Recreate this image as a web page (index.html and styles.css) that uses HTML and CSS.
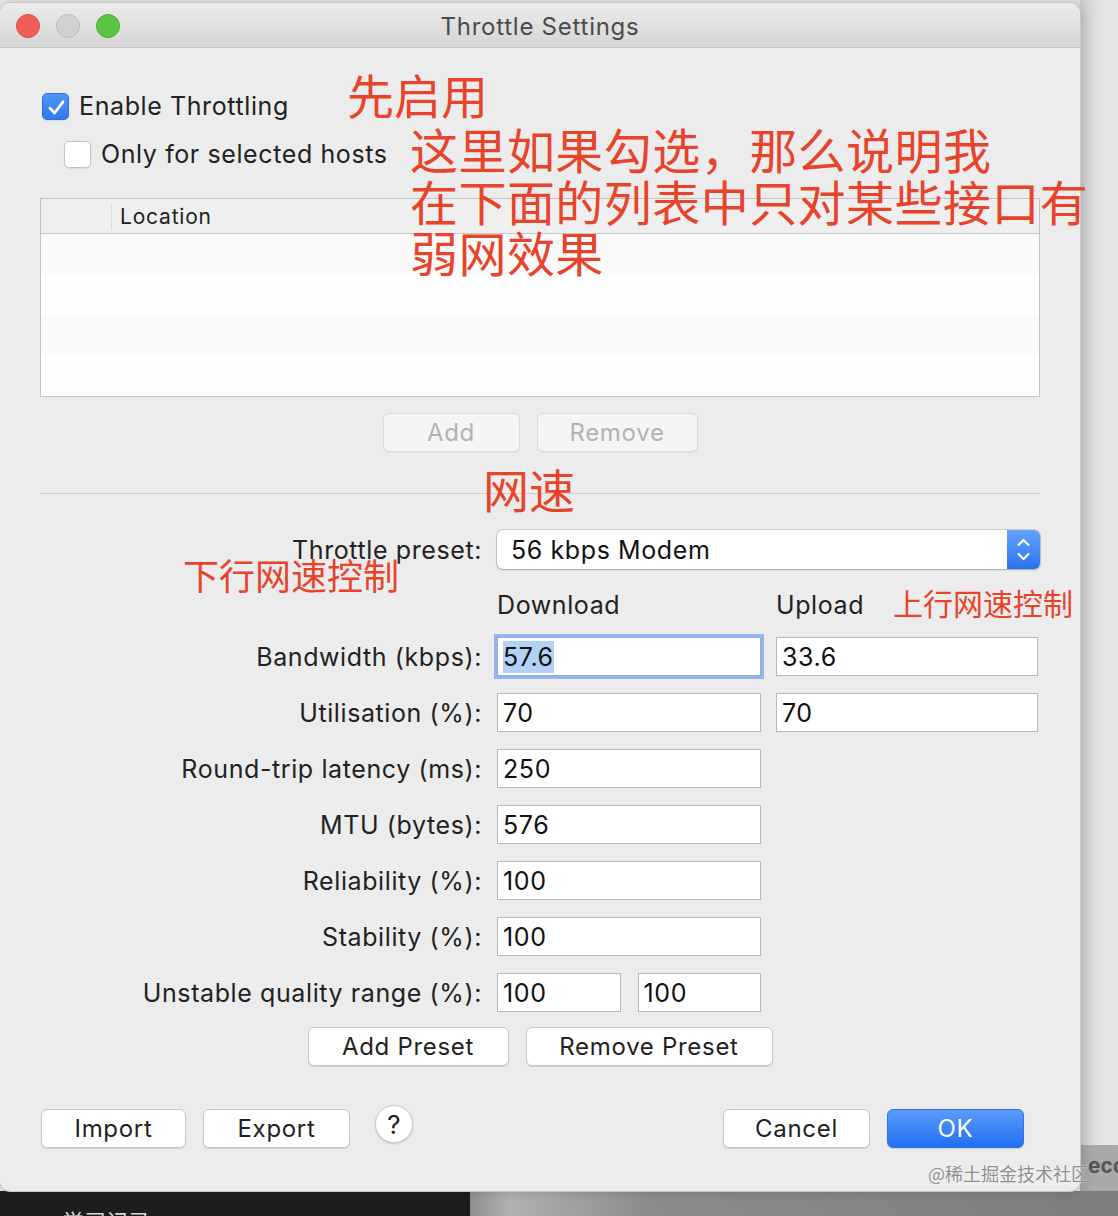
FILE: index.html
```html
<!DOCTYPE html>
<html lang="zh">
<head>
<meta charset="utf-8">
<title>Throttle Settings</title>
<link rel="stylesheet" href="styles.css">
</head>
<body>
<div class="screen">
  <div class="top">
    <div class="window">
      <div class="titlebar">
        <div class="lights">
          <span class="light red"></span>
          <span class="light grey"></span>
          <span class="light green"></span>
        </div>
        <div class="title">Throttle Settings</div>
        <div></div>
      </div>
      <div class="content">
        <div class="check-row row1">
          <span class="cb checked"><svg viewBox="0 0 27 27" width="27" height="27"><path d="M7 14.2 L11.6 19 L20 7.8" fill="none" stroke="#fff" stroke-width="2.8" stroke-linecap="round" stroke-linejoin="round"/></svg></span>
          <span>Enable Throttling</span>
        </div>
        <div class="check-row row2">
          <span class="cb"></span>
          <span>Only for selected hosts</span>
        </div>
        <div class="table">
          <div class="thead">
            <div class="th th-first"></div>
            <div class="th th-loc">Location</div>
          </div>
          <div class="tbody">
            <div class="tr"></div>
            <div class="tr"></div>
            <div class="tr"></div>
            <div class="tr"></div>
          </div>
        </div>
        <div class="btn-row btn-row-list">
          <button class="btn disabled w-add">Add</button>
          <button class="btn disabled w-remove">Remove</button>
        </div>
        <div class="sep"></div>
        <div class="form">
          <div class="frow frow-preset">
            <div class="lbl">Throttle preset:</div>
            <div class="select">
              <span class="select-text">56 kbps Modem</span>
              <span class="stepper"><svg viewBox="0 0 33 39" width="33" height="39"><path d="M11.5 15 L16.5 10 L21.5 15 M11.5 24 L16.5 29 L21.5 24" fill="none" stroke="#fff" stroke-width="2.2" stroke-linecap="round" stroke-linejoin="round"/></svg></span>
            </div>
          </div>
          <div class="frow frow-head">
            <div></div>
            <div class="colhead">Download</div>
            <div class="colhead">Upload</div>
          </div>
          <div class="frow">
            <div class="lbl">Bandwidth (kbps):</div>
            <div class="field focused"><span class="sel">57.6</span></div>
            <div class="field">33.6</div>
          </div>
          <div class="frow">
            <div class="lbl">Utilisation (%):</div>
            <div class="field">70</div>
            <div class="field">70</div>
          </div>
          <div class="frow">
            <div class="lbl">Round-trip latency (ms):</div>
            <div class="field">250</div>
            <div></div>
          </div>
          <div class="frow">
            <div class="lbl">MTU (bytes):</div>
            <div class="field">576</div>
            <div></div>
          </div>
          <div class="frow">
            <div class="lbl">Reliability (%):</div>
            <div class="field">100</div>
            <div></div>
          </div>
          <div class="frow">
            <div class="lbl">Stability (%):</div>
            <div class="field">100</div>
            <div></div>
          </div>
          <div class="frow">
            <div class="lbl">Unstable quality range (%):</div>
            <div class="pair">
              <div class="field">100</div>
              <div class="field">100</div>
            </div>
            <div></div>
          </div>
        </div>
        <div class="btn-row btn-row-preset">
          <button class="btn w-addp">Add Preset</button>
          <button class="btn w-remp">Remove Preset</button>
        </div>
        <div class="footer">
          <button class="btn w-import">Import</button>
          <button class="btn w-export">Export</button>
          <span class="help">?</span>
          <span class="spacer"></span>
          <button class="btn w-cancel">Cancel</button>
          <button class="btn primary w-ok">OK</button>
        </div>
      </div>
    </div>
    <div class="side">
      <div class="side-fill"></div>
      <div class="side-block">eco</div>
    </div>
  </div>
  <div class="bottom">
    <div class="dark"><span class="dark-text">学习记录</span></div>
    <div class="greyzone"></div>
  </div>

  <div class="note n1">先启用</div>
  <div class="note n2">这里如果勾选，那么说明我<br>在下面的列表中只对某些接口有<br>弱网效果</div>
  <div class="note n3">网速</div>
  <div class="note n4">下行网速控制</div>
  <div class="note n5">上行网速控制</div>
  <div class="watermark">@稀土掘金技术社区</div>
</div>
</body>
</html>
```

FILE: styles.css
```css
* { box-sizing: border-box; }
html, body { margin: 0; padding: 0; }
body {
  width: 1118px;
  height: 1216px;
  overflow: hidden;
  background: #e4e4e4;
  font-family: Inter, "Liberation Sans", "Helvetica Neue", Arial, sans-serif;
  color: #222;
  letter-spacing: 0.6px;
}
.screen {
  position: relative;
  width: 1118px;
  height: 1216px;
  display: flex;
  flex-direction: column;
}
.top {
  display: flex;
  height: 1192px;
}
.window {
  width: 1080px;
  flex: none;
  margin-top: 3px;
  height: 1188px;
  background: #ececec;
  border-radius: 10px;
  box-shadow: 0 0 0 1px #c8c8c8, 4px 0 12px rgba(0,0,0,0.18);
  overflow: hidden;
  display: flex;
  flex-direction: column;
  position: relative;
  z-index: 1;
}
.titlebar {
  height: 45px;
  flex: none;
  padding-top: 2px;
  background: linear-gradient(#ebebeb, #d6d6d6);
  border-bottom: 1px solid #c3c3c3;
  display: grid;
  grid-template-columns: 1fr auto 1fr;
  align-items: center;
}
.lights {
  display: flex;
  gap: 16px;
  padding-left: 16px;
}
.light {
  width: 24px;
  height: 24px;
  border-radius: 50%;
}
.light.red { background: #ee5e56; border: 1px solid #da4b43; }
.light.grey { background: #d1d1d1; border: 1px solid #bcbcbc; }
.light.green { background: #5cc443; border: 1px solid #48aa33; }
.title {
  font-size: 24px;
  color: #4b4b4b;
  letter-spacing: 0.75px;
}

.content {
  padding: 0 40px;
  display: flex;
  flex-direction: column;
  flex: 1;
}
.check-row {
  display: flex;
  align-items: center;
  gap: 10px;
  height: 28px;
  font-size: 25px;
  color: #222;
}
.row1 { margin-top: 44px; margin-left: 2px; }
.row2 { margin-top: 20px; margin-left: 24px; }
.cb {
  width: 27px;
  height: 27px;
  border-radius: 5px;
  background: #fff;
  border: 1px solid #c4c4c4;
  box-shadow: 0 1px 1px rgba(0,0,0,0.08);
  flex: none;
  display: block;
}
.cb svg { display: block; }
.cb.checked {
  background: linear-gradient(#4f95f7, #2e78f0);
  border-color: #2c6fe0;
}

.table {
  margin-top: 30px;
  height: 199px;
  border: 1px solid #c2c2c2;
  background: #fff;
  display: flex;
  flex-direction: column;
}
.thead {
  height: 35px;
  flex: none;
  background: #efefef;
  border-bottom: 1px solid #c8c8c8;
  display: flex;
  align-items: center;
}
.th-first {
  width: 71px;
  height: 27px;
  border-right: 1px solid #dadada;
}
.th-loc {
  padding-left: 8px;
  font-size: 21px;
  color: #222;
  letter-spacing: 0.8px;
}
.tbody { flex: 1; display: flex; flex-direction: column; }
.tr { height: 40px; }
.tr:nth-child(odd) { background: #fafafa; }
.tr:nth-child(even) { background: #fefefe; }

.btn {
  font-family: inherit;
  font-size: 24px;
  letter-spacing: 0.7px;
  color: #222;
  height: 39px;
  background: #fff;
  border: 1px solid #c9c9c9;
  border-radius: 6px;
  box-shadow: 0 1px 1px rgba(0,0,0,0.12);
  padding: 0;
  flex: none;
}
.btn.disabled {
  color: #b2b2b2;
  background: #f5f5f5;
  border-color: #dcdcdc;
  box-shadow: 0 1px 1px rgba(0,0,0,0.05);
}
.btn.primary {
  background: linear-gradient(#5b9cf9, #1f6ff2);
  border-color: #2d72e6;
  color: #fff;
}
.btn-row {
  display: flex;
  justify-content: center;
  gap: 17px;
}
.btn-row-list { margin-top: 16px; }
.w-add { width: 137px; }
.w-remove { width: 161px; }
.w-addp { width: 201px; }
.w-remp { width: 247px; }

.sep {
  margin-top: 41px;
  height: 1px;
  background: #cfcfcf;
}

.form {
  margin-top: 36px;
  display: flex;
  flex-direction: column;
  gap: 17px;
}
.frow {
  display: grid;
  grid-template-columns: 442px 264px 262px;
  column-gap: 15px;
  align-items: center;
  height: 39px;
}
.frow-head {
  height: 30px;
  margin-top: 4px;
}
.lbl {
  text-align: right;
  font-size: 25px;
  color: #222;
  white-space: nowrap;
}
.colhead {
  font-size: 25px;
  color: #222;
}
.select {
  grid-column: 2 / 4;
  height: 39px;
  background: #fff;
  border-radius: 6px;
  box-shadow: 0 0 0 1px rgba(0,0,0,0.13), 0 1px 2px rgba(0,0,0,0.2);
  display: flex;
  align-items: center;
  margin-right: -2px;
}
.select-text {
  flex: 1;
  padding-left: 14px;
  font-size: 25px;
  color: #111;
}
.stepper {
  width: 33px;
  height: 39px;
  border-radius: 0 6px 6px 0;
  background: linear-gradient(#63a3fb, #2a71f0);
}
.stepper svg { display: block; }
.field {
  height: 39px;
  background: #fff;
  border: 1px solid #b8b8b8;
  font-size: 25px;
  color: #111;
  padding-left: 5px;
  display: flex;
  align-items: center;
}
.field.focused {
  border-color: #8daee0;
  box-shadow: 0 0 0 3px rgba(120,164,232,0.75);
}
.sel {
  background: #b3d1f5;
  padding: 1px 0;
}
.pair {
  display: flex;
  gap: 17px;
}
.pair .field { flex: 1; }

.btn-row-preset { margin-top: 15px; }

.footer {
  margin-top: 43px;
  display: flex;
  align-items: flex-start;
  margin-right: 16px;
}
.w-import { width: 145px; margin-left: 1px; }
.w-export { width: 147px; margin-left: 17px; }
.help {
  width: 38px;
  height: 38px;
  margin-left: 25px;
  margin-top: -4px;
  border-radius: 50%;
  background: #fff;
  border: 1px solid #cdcdcd;
  box-shadow: 0 1px 2px rgba(0,0,0,0.18);
  display: flex;
  align-items: center;
  justify-content: center;
  font-size: 26px;
  letter-spacing: 0;
  color: #222;
}
.spacer { flex: 1; }
.w-cancel { width: 147px; }
.w-ok { width: 137px; margin-left: 17px; }

.side {
  flex: 1;
  display: flex;
  flex-direction: column;
}
.side-fill {
  flex: 1;
  background: linear-gradient(90deg, #d2d2d2, #e6e6e6 60%);
}
.side-block {
  height: 46px;
  background: #a9a9a9;
  color: #555;
  font-size: 21px;
  font-weight: bold;
  letter-spacing: 0;
  padding-left: 8px;
  padding-top: 8px;
  overflow: hidden;
}

.bottom {
  flex: 1;
  display: flex;
}
.dark {
  width: 470px;
  background: #1d1d1d;
  overflow: hidden;
  position: relative;
}
.dark-text {
  display: block;
  margin-top: 18px;
  margin-left: 62px;
  color: #d8d8d8;
  font-family: "Noto Sans CJK SC", sans-serif;
  font-size: 22px;
  line-height: 1;
  letter-spacing: 0;
}
.greyzone {
  flex: 1;
  background: linear-gradient(90deg, #8e8e8e, #b1b1b1 6%, #8b8b8b 28%, #7d7d7d 100%);
}

.note {
  position: absolute;
  color: #e8432b;
  font-family: "Noto Sans CJK SC", sans-serif;
  line-height: 1;
  letter-spacing: 0;
  white-space: nowrap;
  z-index: 2;
}
.n1 { left: 347px; top: 70px; font-size: 47px; }
.n2 { left: 410px; top: 123px; font-size: 48px; line-height: 51.5px; letter-spacing: 0.45px; }
.n3 { left: 483px; top: 465px; font-size: 46px; }
.n4 { left: 183px; top: 556px; font-size: 36px; }
.n5 { left: 893px; top: 587px; font-size: 30px; }
.watermark {
  position: absolute;
  left: 928px;
  top: 1164px;
  font-family: "Noto Sans CJK SC", sans-serif;
  font-size: 18px;
  line-height: 1;
  letter-spacing: 0;
  color: #8f8f8f;
  text-shadow: 0 0 2px #fff;
  z-index: 3;
  white-space: nowrap;
}
```
